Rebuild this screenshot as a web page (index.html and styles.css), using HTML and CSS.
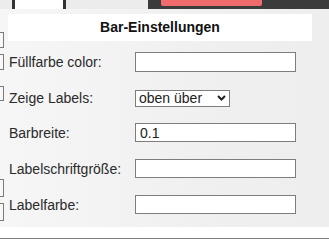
FILE: index.html
```html
<!DOCTYPE html>
<html lang="de">
<head>
    <meta charset="UTF-8">
    <meta name="viewport" content="width=device-width, initial-scale=1.0">
    <title>Bar-Einstellungen</title>
    <link rel="stylesheet" href="styles.css">
</head>
<body>
    <div class="topbar">
        <div class="tab-gap"></div>
        <div class="tab-white"></div>
        <div class="tab-light"></div>
        <div class="tab-dark"><div class="red-btn"></div></div>
    </div>

    <div class="main">
        <div class="edge">
            <div class="edge-box b1"></div>
            <div class="edge-box b2"></div>
            <div class="edge-box b3"></div>
            <div class="edge-box b4"></div>
            <div class="edge-box b5"></div>
        </div>
        <div class="panel">
            <h2 class="panel-title">Bar-Einstellungen</h2>
            <div class="rows">
                <label for="fillColor">Füllfarbe color:</label>
                <input type="text" id="fillColor">

                <label for="showLabels">Zeige Labels:</label>
                <div class="select-wrap">
                    <select id="showLabels">
                        <option>oben über</option>
                        <option>innen</option>
                        <option>keine</option>
                    </select>
                    <svg class="chevron" width="9" height="6" viewBox="0 0 9 6">
                        <path d="M1 1 L4.5 4.5 L8 1" fill="none" stroke="#222" stroke-width="2"/>
                    </svg>
                </div>

                <label for="barWidth">Barbreite:</label>
                <input type="text" id="barWidth" value="0.1">

                <label for="labelSize">Labelschriftgröße:</label>
                <input type="text" id="labelSize">

                <label for="labelColor">Labelfarbe:</label>
                <input type="text" id="labelColor">
            </div>
        </div>
    </div>

    <div class="footer">
        <div class="footer-line"></div>
    </div>
</body>
</html>
```

FILE: styles.css
```css
body {
    margin: 0;
    font-family: "Liberation Sans", Arial, sans-serif;
    background-color: #ffffff;
    color: #222222;
}
.topbar {
    display: flex;
    height: 9px;
}
.tab-gap {
    width: 12px;
    background-color: #ececec;
}
.tab-white {
    width: 48px;
    background-color: #ffffff;
    border-left: 3px solid #333333;
    border-right: 3px solid #333333;
}
.tab-light {
    width: 82px;
    background-color: #ececec;
}
.tab-dark {
    flex: 1;
    background-color: #3b3b3b;
    padding-left: 13px;
}
.red-btn {
    width: 101px;
    height: 6px;
    background-color: #f06c6c;
    border-radius: 0 0 2px 2px;
}
.main {
    display: flex;
    height: 218px;
    background: linear-gradient(to right, #f6f6f6, #efefef 70%, #eeeeee);
}
.edge {
    width: 4px;
    display: flex;
    flex-direction: column;
}
.edge-box {
    width: 3px;
    border: 1px solid #7a7a7a;
    border-left: none;
    background-color: #f8f8f8;
}
.b1 { margin-top: 23px; height: 14px; }
.b2 { margin-top: 6px; height: 14px; }
.b3 { margin-top: 16px; height: 13px; }
.b4 { margin-top: 78px; height: 16px; }
.b5 { margin-top: 6px; height: 16px; }
.panel {
    flex: 1;
    padding-top: 5px;
}
.panel-title {
    margin: 0 0 0 4px;
    width: 304px;
    height: 27px;
    line-height: 27px;
    background-color: #ffffff;
    text-align: center;
    font-size: 14px;
    font-weight: bold;
    color: #111111;
}
.rows {
    display: grid;
    grid-template-columns: 126px auto;
    row-gap: 17px;
    align-items: center;
    justify-items: start;
    margin-top: 11px;
    padding-left: 5px;
}
.rows label {
    font-size: 14px;
    color: #2a2a2a;
}
.rows input {
    box-sizing: border-box;
    width: 161px;
    height: 19px;
    margin: 0;
    padding: 0 4px;
    border: 1px solid #7d7d7d;
    border-radius: 0;
    background-color: #ffffff;
    font-family: "Liberation Sans", Arial, sans-serif;
    font-size: 14px;
    color: #222222;
}
.rows input:first-of-type {
    height: 20px;
}
.select-wrap {
    position: relative;
    height: 17px;
}
.select-wrap select {
    appearance: none;
    -webkit-appearance: none;
    box-sizing: border-box;
    width: 95px;
    height: 17px;
    margin: 0;
    padding: 0 0 0 3px;
    border: 1px solid #7d7d7d;
    border-radius: 0;
    background-color: #ffffff;
    font-family: "Liberation Sans", Arial, sans-serif;
    font-size: 14px;
    line-height: 15px;
    color: #222222;
}
.chevron {
    position: absolute;
    left: 82px;
    top: 6px;
    pointer-events: none;
}
.footer {
    height: 16px;
    padding-top: 11px;
    box-sizing: border-box;
}
.footer-line {
    height: 1px;
    background-color: #808080;
}
```
